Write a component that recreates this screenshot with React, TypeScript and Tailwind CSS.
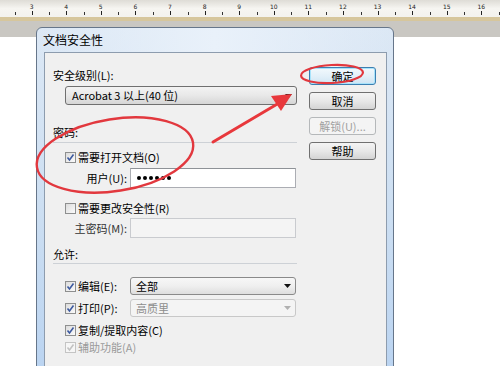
import { ReactNode } from 'react';

const font = { fontFamily: '"Noto Sans CJK SC", "Noto Sans", sans-serif' };

// ruler: one cell per centimetre, minor tick on the cell's left edge
const rulerMarks = [2, 3, 4, 5, 6, 7, 8, 9, 10, 11, 12, 13, 14, 15, 16, 17];

function Ruler() {
  return (
    <div className="h-[17px] bg-gradient-to-b from-[#dedcd6] via-[#f6f5f1] to-[#f3f2ee] overflow-hidden">
      <div className="flex ml-[-20px]">
        {rulerMarks.map((n) => (
          <div key={n} className="relative w-[34.6px] h-[17px] shrink-0">
            <div className="absolute left-0 top-[12px] w-px h-[3px] bg-[#333]" />
            {n > 2 && n < 17 && (
              <div className="absolute left-[17px] top-[4px] text-[6px] leading-[6px] text-[#222] -translate-x-1/2" style={{ fontFamily: '"DejaVu Sans", sans-serif' }}>
                {n}
              </div>
            )}
            <div className="absolute left-[17px] top-[11px] w-px h-[4px] bg-[#222]" />
          </div>
        ))}
      </div>
    </div>
  );
}

function Check({ on, disabled }: { on: boolean; disabled?: boolean }) {
  return (
    <div
      className={`w-[11px] h-[11px] border flex items-center justify-center shrink-0 ${
        disabled ? 'border-[#c4c4c4] bg-[#f6f6f6]' : 'border-[#8e8f8f] bg-gradient-to-br from-[#dcdcdc] to-[#fbfbfb]'
      }`}
    >
      {on && (
        <svg width="9" height="9" viewBox="0 0 9 9">
          <path d="M1.5 4.5 L3.5 7 L7.5 1.5" fill="none" stroke={disabled ? '#c2c2c2' : '#3d5aa0'} strokeWidth="1.6" />
        </svg>
      )}
    </div>
  );
}

function CheckRow({ on, disabled, children }: { on: boolean; disabled?: boolean; children: ReactNode }) {
  return (
    <div className="flex items-center gap-[2px] pl-[12px] h-[16px]">
      <Check on={on} disabled={disabled} />
      <span className={`text-[11px] leading-[16px] ${disabled ? 'text-[#9a9a9a]' : 'text-black'}`}>{children}</span>
    </div>
  );
}

function Arrow({ grey }: { grey?: boolean }) {
  return (
    <svg width="7" height="4" viewBox="0 0 7 4" className="shrink-0">
      <path d="M0 0 H7 L3.5 4 Z" fill={grey ? '#b0b0b0' : '#111'} />
    </svg>
  );
}

function Button({ label, primary, disabled }: { label: string; primary?: boolean; disabled?: boolean }) {
  let cls = 'border-[#707070] bg-gradient-to-b from-[#f4f4f4] via-[#e8e8e8] to-[#d4d4d4] text-black';
  if (primary) cls = 'border-[#3c7fb1] bg-gradient-to-b from-[#f2f9fd] via-[#e3f0f9] to-[#cfe4f3] text-black shadow-[inset_0_0_0_1px_#a8e3fb]';
  if (disabled) cls = 'border-[#b5b8ba] bg-[#f4f4f4] text-[#a0a0a0]';
  return (
    <div className={`w-[67px] h-[18px] rounded-[3px] border flex items-center justify-center text-[11px] leading-none ${cls}`}>
      {label}
    </div>
  );
}

export default function App() {
  return (
    <div className="relative w-[500px] h-[366px] bg-white overflow-hidden" style={font}>
      <Ruler />
      <div className="h-[4px] bg-[#d6c69c]" />
      <div className="h-[16px] bg-[#c9c7c2]" />

      {/* Dialog window */}
      <div className="absolute left-[36px] top-[27px] w-[358px] h-[360px] rounded-t-[6px] border border-[#66768a] bg-gradient-to-b from-[#dce8f5] via-[#cddff2] to-[#b9d3f1] flex flex-col">
        <div className="h-[24px] pl-[6px] flex items-center text-[12px] text-black bg-gradient-to-r from-transparent via-[#e9f1fa] to-transparent rounded-t-[6px]">
          文档安全性
        </div>
        <div className="flex-1 ml-[7px] mr-[6px] border border-[#8d9cae] bg-[#f0f0f0] flex pt-[14px]">
          {/* Left column */}
          <div className="w-[244px] ml-[8px] flex flex-col">
            <div className="h-[16px] text-[11px] leading-[16px]">安全级别(L):</div>
            <div className="mt-[3px] ml-[12px] h-[19px] rounded-[3px] border border-[#707070] bg-gradient-to-b from-[#f3f3f3] via-[#e8e8e8] to-[#d6d6d6] flex items-center justify-between pl-[6px] pr-[4px]">
              <span className="text-[11px]">Acrobat 3 以上(40 位)</span>
              <Arrow />
            </div>

            <div className="mt-[19px] h-[16px] text-[11px] leading-[16px]">密码:</div>
            <div className="mt-[2px] h-px bg-[#cdd1d6]" />
            <div className="mt-[6px]">
              <CheckRow on>需要打开文档(O)</CheckRow>
            </div>
            <div className="mt-[3px] flex items-center">
              <span className="w-[74px] text-right text-[11px]">用户(U):</span>
              <div className="ml-[3px] w-[166px] h-[20px] border border-[#abadb3] border-t-[#8e9297] bg-white flex items-center gap-[2px] pl-[6px]">
                {[0, 1, 2, 3, 4, 5].map((i) => (
                  <span key={i} className="w-[4px] h-[4px] rounded-full bg-black" />
                ))}
              </div>
            </div>

            <div className="mt-[12px]">
              <CheckRow on={false}>需要更改安全性(R)</CheckRow>
            </div>
            <div className="mt-[2px] flex items-center">
              <span className="w-[74px] text-right text-[11px] text-[#333]">主密码(M):</span>
              <div className="ml-[3px] w-[166px] h-[20px] border border-[#c9cbcf] bg-[#f4f4f4]" />
            </div>

            <div className="mt-[8px] h-[16px] text-[11px] leading-[16px]">允许:</div>
            <div className="mt-[1px] h-px bg-[#cdd1d6]" />

            <div className="mt-[13px] flex items-center justify-between pr-[1px]">
              <CheckRow on>编辑(E):</CheckRow>
              <div className="w-[166px] h-[18px] rounded-[3px] border border-[#8a8a8a] bg-gradient-to-b from-[#f7f7f7] via-[#efefef] to-[#dedede] flex items-center justify-between pl-[5px] pr-[4px]">
                <span className="text-[11px]">全部</span>
                <Arrow />
              </div>
            </div>
            <div className="mt-[4px] flex items-center justify-between pr-[1px]">
              <CheckRow on>打印(P):</CheckRow>
              <div className="w-[166px] h-[18px] rounded-[3px] border border-[#c8c8c8] bg-[#f4f4f4] flex items-center justify-between pl-[5px] pr-[4px]">
                <span className="text-[11px] text-[#8d8d8d]">高质里</span>
                <Arrow grey />
              </div>
            </div>
            <div className="mt-[5px]">
              <CheckRow on>复制/提取内容(C)</CheckRow>
            </div>
            <div className="mt-[1px]">
              <CheckRow on disabled>辅助功能(A)</CheckRow>
            </div>
          </div>

          {/* Right buttons */}
          <div className="ml-[12px] flex flex-col gap-[7px]">
            <Button label="确定" primary />
            <Button label="取消" />
            <Button label="解锁(U)..." disabled />
            <Button label="帮助" />
          </div>
        </div>
      </div>

      {/* Red hand-drawn annotations */}
      <svg className="absolute inset-0 pointer-events-none" width="500" height="366" viewBox="0 0 500 366">
        <ellipse cx="332" cy="74" rx="31" ry="9" transform="rotate(-3 332 74)" fill="none" stroke="#e2383e" strokeWidth="2.2" />
        <ellipse cx="115" cy="155" rx="79" ry="36" transform="rotate(-9 115 155)" fill="none" stroke="#e2383e" strokeWidth="2.4" />
        <path d="M213 142 L279 103" stroke="#e8383c" strokeWidth="3" strokeLinecap="round" fill="none" />
        <path d="M292 94 L271 96 L281 111 Z" fill="#e8383c" />
      </svg>
    </div>
  );
}
